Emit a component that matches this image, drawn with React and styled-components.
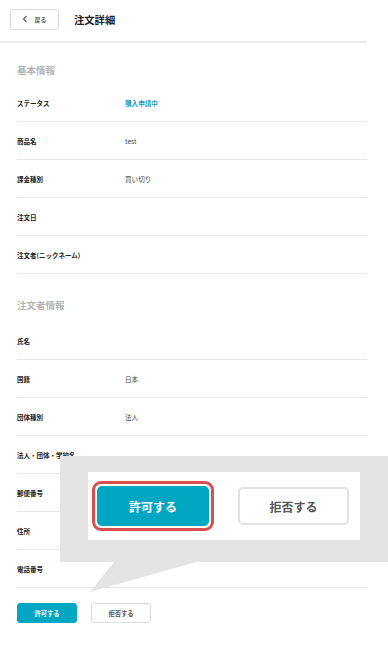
import React from 'react'
import styled, { createGlobalStyle } from 'styled-components'

const GlobalStyle = createGlobalStyle`
  body {
    margin: 0;
    background: #fff;
    font-family: 'Noto Sans CJK JP', 'Noto Sans', sans-serif;
    color: #222;
  }
`

const Page = styled.div`
  position: relative;
  width: 388px;
  height: 654px;
  overflow: hidden;
  background: #fff;
`

const Frame = styled.div`
  width: 367px;
`

const Header = styled.header`
  display: flex;
  align-items: center;
  height: 41px;
  padding-left: 10px;
  border-bottom: 2px solid #ececec;
  gap: 15px;
`

const BackButton = styled.button`
  display: flex;
  align-items: center;
  justify-content: center;
  gap: 6px;
  width: 49px;
  height: 21px;
  margin-top: -3px;
  padding: 0;
  background: #fff;
  border: 1px solid #dcdcdc;
  border-radius: 3px;
  font-family: inherit;
  font-size: 6px;
  font-weight: 700;
  color: #666;
`

const Title = styled.h1`
  margin: 0 0 3px;
  font-size: 10.3px;
  font-weight: 700;
  color: #222;
`

const Main = styled.main`
  padding-left: 17px;
`

const Section = styled.section`
  padding-top: ${(p) => p.$top}px;
`

const SectionTitle = styled.h2`
  margin: 0 0 ${(p) => p.$gap}px;
  height: 14px;
  line-height: 14px;
  font-size: 9.5px;
  font-weight: 700;
  color: #b4b4b4;
`

const Row = styled.div`
  display: flex;
  align-items: center;
  height: 37px;
  border-bottom: 1px solid #e6e6e6;
`

const Label = styled.div`
  width: 108px;
  font-size: 6.5px;
  font-weight: 700;
  color: #222;
`

const Value = styled.div`
  font-size: 6.6px;
  font-weight: ${(p) => (p.$accent ? 700 : 400)};
  color: ${(p) => (p.$accent ? '#139fbf' : '#444')};
`

const Actions = styled.div`
  display: flex;
  gap: 14px;
  padding-top: 15px;
`

const SmallButton = styled.button`
  width: 60px;
  height: 20px;
  padding: 0;
  border-radius: 3px;
  font-family: inherit;
  font-size: 6.3px;
  font-weight: 700;
  border: 1px solid ${(p) => (p.$primary ? '#00a6c2' : '#dcdcdc')};
  background: ${(p) => (p.$primary ? '#00a6c2' : '#fff')};
  color: ${(p) => (p.$primary ? '#fff' : '#555')};
`

const Callout = styled.div`
  position: absolute;
  left: 60px;
  top: 456px;
  width: 328px;
  height: 106px;
  padding: 16px 28px;
  box-sizing: border-box;
  background: #e4e4e4;
`

const Tail = styled.svg`
  position: absolute;
  left: 30px;
  top: 106px;
`

const Panel = styled.div`
  display: flex;
  align-items: center;
  gap: 24px;
  width: 272px;
  height: 68px;
  padding-left: 4px;
  box-sizing: border-box;
  background: #fff;
`

const Ring = styled.div`
  display: flex;
  align-items: center;
  justify-content: center;
  padding: 2px;
  border: 3px solid #d94f4f;
  border-radius: 9px;
`

const BigButton = styled.button`
  width: ${(p) => (p.$primary ? 112 : 111)}px;
  height: ${(p) => (p.$primary ? 40 : 38)}px;
  padding: 0;
  border-radius: 5px;
  font-family: inherit;
  font-size: 12px;
  font-weight: 700;
  border: ${(p) => (p.$primary ? 'none' : '2px solid #e2e2e2')};
  background: ${(p) => (p.$primary ? '#00a6c2' : '#fff')};
  color: ${(p) => (p.$primary ? '#fff' : '#555')};
`

const basic = [
  { label: 'ステータス', value: '購入申請中', accent: true },
  { label: '商品名', value: 'test' },
  { label: '課金種別', value: '買い切り' },
  { label: '注文日', value: '' },
  { label: '注文者(ニックネーム)', value: '' },
]

const orderer = [
  { label: '氏名', value: '' },
  { label: '国籍', value: '日本' },
  { label: '団体種別', value: '法人' },
  { label: '法人・団体・学校名', value: '' },
  { label: '郵便番号', value: '' },
  { label: '住所', value: '' },
  { label: '電話番号', value: '' },
]

const Rows = ({ items }) =>
  items.map((item) => (
    <Row key={item.label}>
      <Label>{item.label}</Label>
      <Value $accent={item.accent}>{item.value}</Value>
    </Row>
  ))

export default function App() {
  return (
    <Page>
      <GlobalStyle />
      <Frame>
        <Header>
          <BackButton>
            <svg width="6" height="8" viewBox="0 0 6 8">
              <path d="M4.5 1 L1.5 4 L4.5 7" fill="none" stroke="#555" strokeWidth="1.1" />
            </svg>
            戻る
          </BackButton>
          <Title>注文詳細</Title>
        </Header>
        <Main>
          <Section $top={20}>
            <SectionTitle $gap={7}>基本情報</SectionTitle>
            <Rows items={basic} />
          </Section>
          <Section $top={24}>
            <SectionTitle $gap={10}>注文者情報</SectionTitle>
            <Rows items={orderer} />
          </Section>
          <Actions>
            <SmallButton $primary>許可する</SmallButton>
            <SmallButton>拒否する</SmallButton>
          </Actions>
        </Main>
      </Frame>
      <Callout>
        <Panel>
          <Ring>
            <BigButton $primary>許可する</BigButton>
          </Ring>
          <BigButton>拒否する</BigButton>
        </Panel>
        <Tail width="110" height="32" viewBox="0 0 110 32">
          <polygon points="24,0 106,0 0,30" fill="#e4e4e4" />
        </Tail>
      </Callout>
    </Page>
  )
}
